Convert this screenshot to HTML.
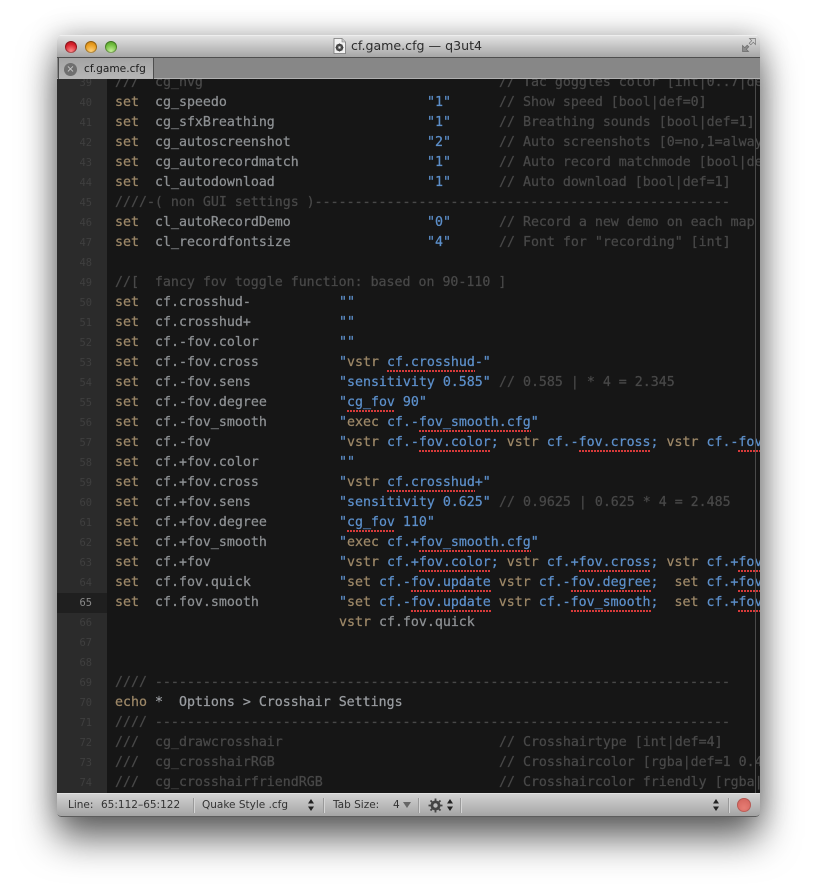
<!DOCTYPE html>
<html><head><meta charset="utf-8"><title>cf.game.cfg — q3ut4</title>
<style>
html,body{margin:0;padding:0;background:#fff;width:817px;height:896px;overflow:hidden}
#w{position:absolute;left:57px;top:35px;width:703px;height:782px;border-radius:5px 5px 4px 4px;box-shadow:0 22px 38px rgba(0,0,0,.58),0 0 28px rgba(0,0,0,.25);overflow:hidden;font-family:"DejaVu Sans","Liberation Sans",sans-serif}
#t{position:absolute;left:0;top:0;width:703px;height:22px;background:linear-gradient(#e2e2e2,#a6a6a6);border-top:1px solid #eee;box-sizing:border-box}
#ttl{position:absolute;left:294px;top:2px;font-size:12.6px;line-height:16px;color:#2c2c2c;white-space:pre;filter:blur(.25px)}
#b{position:absolute;left:0;top:22px;width:703px;height:22px;background:#878787;border-top:1px solid #4e4e4e;border-bottom:1px solid #b0b0b0;box-sizing:border-box}
#tab{position:absolute;left:1px;top:-1px;width:96px;height:22px;background:linear-gradient(#a4a4a4,#b6b6b6);border:1px solid #4e4e4e;border-bottom:0;box-sizing:border-box;font-size:10.6px;line-height:22px;color:#1c1c1c;padding-left:25px;filter:blur(.2px)}
#x{position:absolute;left:5px;top:5px;width:13px;height:13px;border-radius:50%;background:#6f6f6f;color:#ccc;font-size:10px;line-height:13px;text-align:center;padding:0}
#e{position:absolute;left:0;top:44px;width:703px;height:714px;background:#161616;overflow:hidden}
#g{position:absolute;left:0;top:-6px;width:50px;height:740px;background:#2b2b2b}
#g div{height:20px;line-height:20px;width:35px;padding-right:15px;text-align:right;font:10.4px/20px "DejaVu Sans Mono",monospace;color:#3f3f3f;filter:blur(.3px)}
#g .a{background:#1f1f1f;color:#8a8a8a}
#c{position:absolute;left:58px;top:-6px;width:650px;font:13.28px/20px "DejaVu Sans Mono","Liberation Mono",monospace;color:#8d9093;filter:blur(.3px);-webkit-text-stroke:.25px}
#c p{margin:0;height:20px;position:relative;white-space:pre}
#c p>span{position:absolute;top:0;white-space:pre}
#c b{font-weight:400}
.a5{left:40px}.a28{left:224px}.a39{left:312px}.a48{left:384px}.a0{left:0}
.k{color:#9c8767}.m{color:#484848}.s{color:#5c8fca}.n{color:#8d9093}.l{color:#9a9da1}
.u{display:inline-block;height:20px;background:repeating-linear-gradient(90deg,#d63a3a 0 2px,transparent 2px 3px) left 17px/100% 2px no-repeat}
#guide{position:absolute;left:698px;top:0;width:1px;height:714px;background:#4a4a4a}
#st{position:absolute;left:0;top:758px;width:703px;height:24px;background:linear-gradient(#d2d2d2,#a4a4a4);border-top:1px solid #e2e2e2;border-bottom:1px solid #5c5c5c;box-sizing:border-box;border-radius:0 0 4px 4px}
#st span{position:absolute;top:4px;font-size:10.5px;line-height:15px;color:#333;white-space:pre;filter:blur(.2px)}
#st i{position:absolute;top:4px;width:1px;height:15px;background:#9a9a9a;box-shadow:1px 0 0 #d4d4d4}
#st svg{position:absolute}
.tl{position:absolute;top:5px;width:12px;height:12px;border-radius:50%;box-shadow:inset 0 0 0 1px rgba(0,0,0,.3)}
</style></head><body>
<div id="w">
<div id="t">
<div class="tl" style="left:8px;background:radial-gradient(circle at 50% 85%,#ff8a8a,#d61f2a 60%,#a8141c)"></div>
<div class="tl" style="left:28px;background:radial-gradient(circle at 50% 85%,#ffd27a,#e79a1c 60%,#b87412)"></div>
<div class="tl" style="left:48px;background:radial-gradient(circle at 50% 85%,#c6f09a,#6dbb3a 60%,#4a8f22)"></div>
<svg style="position:absolute;left:276px;top:2px" width="13" height="16" viewBox="0 0 13 16"><path d="M1 .5H9L12.500 4V15.500H1Z" fill="#f2f2f2" stroke="#777" stroke-width=".8"/><path d="M9 .5V4H12.500" fill="#ccc" stroke="#777" stroke-width=".6"/><circle cx="6.500" cy="9.500" r="2.800" fill="none" stroke="#444" stroke-width="2"/><path d="M6.500 5.500V13.500M2.500 9.500H10.500M3.700 6.700L9.300 12.300M9.300 6.700L3.700 12.300" stroke="#444" stroke-width="1"/><circle cx="6.500" cy="9.500" r="1.200" fill="#eee"/></svg>
<div id="ttl">cf.game.cfg — q3ut4</div>
<svg style="position:absolute;left:685px;top:2px" width="14" height="14" viewBox="0 0 14 14"><path d="M13.500.5V6.500L11.300 4.300 8.800 6.800 7.200 5.200 9.700 2.700 7.500.5Z" fill="#cfcfcf" stroke="#777" stroke-width=".7"/><path d="M.5 13.500V7.500L2.700 9.700 5.200 7.200 6.800 8.800 4.300 11.300 6.500 13.500Z" fill="#8c8c8c" stroke="#6a6a6a" stroke-width=".7"/></svg>
</div>
<div id="b"><div id="tab"><div id="x">×</div>cf.game.cfg</div></div>
<div id="e">
<div id="g"><div>39</div><div>40</div><div>41</div><div>42</div><div>43</div><div>44</div><div>45</div><div>46</div><div>47</div><div>48</div><div>49</div><div>50</div><div>51</div><div>52</div><div>53</div><div>54</div><div>55</div><div>56</div><div>57</div><div>58</div><div>59</div><div>60</div><div>61</div><div>62</div><div>63</div><div>64</div><div class="a">65</div><div>66</div><div>67</div><div>68</div><div>69</div><div>70</div><div>71</div><div>72</div><div>73</div><div>74</div></div>
<div id="c">
<p><span class="a0 m">///</span><span class="a5 m">cg_nvg</span><span class="a48 m">// Tac goggles color [int|0..7|def=0]</span></p>
<p><span class="a0 k">set</span><span class="a5 n">cg_speedo</span><span class="a39 s">"1"</span><span class="a48 m">// Show speed [bool|def=0]</span></p>
<p><span class="a0 k">set</span><span class="a5 n">cg_sfxBreathing</span><span class="a39 s">"1"</span><span class="a48 m">// Breathing sounds [bool|def=1]</span></p>
<p><span class="a0 k">set</span><span class="a5 n">cg_autoscreenshot</span><span class="a39 s">"2"</span><span class="a48 m">// Auto screenshots [0=no,1=always]</span></p>
<p><span class="a0 k">set</span><span class="a5 n">cg_autorecordmatch</span><span class="a39 s">"1"</span><span class="a48 m">// Auto record matchmode [bool|def=1]</span></p>
<p><span class="a0 k">set</span><span class="a5 n">cl_autodownload</span><span class="a39 s">"1"</span><span class="a48 m">// Auto download [bool|def=1]</span></p>
<p><span class="a0 m">////-( non GUI settings )----------------------------------------------------</span></p>
<p><span class="a0 k">set</span><span class="a5 n">cl_autoRecordDemo</span><span class="a39 s">"0"</span><span class="a48 m">// Record a new demo on each map [bool]</span></p>
<p><span class="a0 k">set</span><span class="a5 n">cl_recordfontsize</span><span class="a39 s">"4"</span><span class="a48 m">// Font for "recording" [int]</span></p>
<p></p>
<p><span class="a0 m">//[  fancy fov toggle function: based on 90-110 ]</span></p>
<p><span class="a0 k">set</span><span class="a5 n">cf.crosshud-</span><span class="a28 s">""</span></p>
<p><span class="a0 k">set</span><span class="a5 n">cf.crosshud+</span><span class="a28 s">""</span></p>
<p><span class="a0 k">set</span><span class="a5 n">cf.-fov.color</span><span class="a28 s">""</span></p>
<p><span class="a0 k">set</span><span class="a5 n">cf.-fov.cross</span><span class="a28 s">"<b class="k">vstr</b> <b class="u">cf.crosshud</b>-"</span></p>
<p><span class="a0 k">set</span><span class="a5 n">cf.-fov.sens</span><span class="a28 s">"sensitivity 0.585"</span><span class="a48 m">// 0.585 | * 4 = 2.345</span></p>
<p><span class="a0 k">set</span><span class="a5 n">cf.-fov.degree</span><span class="a28 s">"<b class="u">cg_fov</b> 90"</span></p>
<p><span class="a0 k">set</span><span class="a5 n">cf.-fov_smooth</span><span class="a28 s">"<b class="k">exec</b> cf.-<b class="u">fov_smooth.cfg</b>"</span></p>
<p><span class="a0 k">set</span><span class="a5 n">cf.-fov</span><span class="a28 s">"<b class="k">vstr</b> cf.-<b class="u">fov.color</b>; <b class="k">vstr</b> cf.-<b class="u">fov.cross</b>; <b class="k">vstr</b> cf.-<b class="u">fov.sens</b>"</span></p>
<p><span class="a0 k">set</span><span class="a5 n">cf.+fov.color</span><span class="a28 s">""</span></p>
<p><span class="a0 k">set</span><span class="a5 n">cf.+fov.cross</span><span class="a28 s">"<b class="k">vstr</b> <b class="u">cf.crosshud</b>+"</span></p>
<p><span class="a0 k">set</span><span class="a5 n">cf.+fov.sens</span><span class="a28 s">"sensitivity 0.625"</span><span class="a48 m">// 0.9625 | 0.625 * 4 = 2.485</span></p>
<p><span class="a0 k">set</span><span class="a5 n">cf.+fov.degree</span><span class="a28 s">"<b class="u">cg_fov</b> 110"</span></p>
<p><span class="a0 k">set</span><span class="a5 n">cf.+fov_smooth</span><span class="a28 s">"<b class="k">exec</b> cf.+<b class="u">fov_smooth.cfg</b>"</span></p>
<p><span class="a0 k">set</span><span class="a5 n">cf.+fov</span><span class="a28 s">"<b class="k">vstr</b> cf.+<b class="u">fov.color</b>; <b class="k">vstr</b> cf.+<b class="u">fov.cross</b>; <b class="k">vstr</b> cf.+<b class="u">fov.sens</b>"</span></p>
<p><span class="a0 k">set</span><span class="a5 n">cf.fov.quick</span><span class="a28 s">"<b class="k">set</b> cf.-<b class="u">fov.update</b> <b class="k">vstr</b> cf.-<b class="u">fov.degree</b>;  <b class="k">set</b> cf.+<b class="u">fov.update</b>"</span></p>
<p><span class="a0 k">set</span><span class="a5 n">cf.fov.smooth</span><span class="a28 s">"<b class="k">set</b> cf.-<b class="u">fov.update</b> <b class="k">vstr</b> cf.-<b class="u">fov_smooth</b>;  <b class="k">set</b> cf.+<b class="u">fov.update</b>"</span></p>
<p><span class="a28 k">vstr <b class="n">cf.fov.quick</b></span></p>
<p></p>
<p></p>
<p><span class="a0 m">//// ------------------------------------------------------------------------</span></p>
<p><span class="a0 k">echo</span><span class="a5 l">*  Options &gt; Crosshair Settings</span></p>
<p><span class="a0 m">//// ------------------------------------------------------------------------</span></p>
<p><span class="a0 m">///</span><span class="a5 m">cg_drawcrosshair</span><span class="a48 m">// Crosshairtype [int|def=4]</span></p>
<p><span class="a0 m">///</span><span class="a5 m">cg_crosshairRGB</span><span class="a48 m">// Crosshaircolor [rgba|def=1 0.4 0 1]</span></p>
<p><span class="a0 m">///</span><span class="a5 m">cg_crosshairfriendRGB</span><span class="a48 m">// Crosshaircolor friendly [rgba|def=0]</span></p>
</div>
<div id="guide"></div>
</div>
<div id="st">
<span style="left:11px">Line:</span><span style="left:44px">65:112–65:122</span><i style="left:136px"></i>
<span style="left:145px">Quake Style .cfg</span>
<svg style="left:251px;top:4px" width="6" height="14" viewBox="0 0 6 14"><path d="M3 1L6 5.500H0ZM3 13L0 8.500H6Z" fill="#222"/></svg>
<i style="left:266px"></i>
<span style="left:276px">Tab Size:</span><span style="left:336px">4</span>
<svg style="left:346px;top:8px" width="8" height="6" viewBox="0 0 8 6"><path d="M0 0H8L4 6Z" fill="#666"/></svg>
<i style="left:361px"></i>
<svg style="left:371px;top:4px" width="15" height="15" viewBox="0 0 15 15"><circle cx="7.500" cy="7.500" r="3.800" fill="none" stroke="#444" stroke-width="2.400"/><path d="M7.500.5V14.500M.5 7.500H14.500M2.500 2.500L12.500 12.500M12.500 2.500L2.500 12.500" stroke="#444" stroke-width="1.800"/><circle cx="7.500" cy="7.500" r="2.200" fill="#bbb"/></svg>
<svg style="left:390px;top:4px" width="6" height="14" viewBox="0 0 6 14"><path d="M3 1L6 5.500H0ZM3 13L0 8.500H6Z" fill="#222"/></svg>
<i style="left:403px"></i>
<svg style="left:656px;top:4px" width="6" height="14" viewBox="0 0 6 14"><path d="M3 1L6 5.500H0ZM3 13L0 8.500H6Z" fill="#222"/></svg>
<i style="left:671px"></i>
<div style="position:absolute;left:680px;top:4px;width:14px;height:14px;border-radius:50%;background:radial-gradient(circle at 50% 70%,#e67d74,#cf5f58);box-shadow:inset 0 0 0 1px rgba(120,60,60,.35)"></div>
</div>
</div>
</body></html>
